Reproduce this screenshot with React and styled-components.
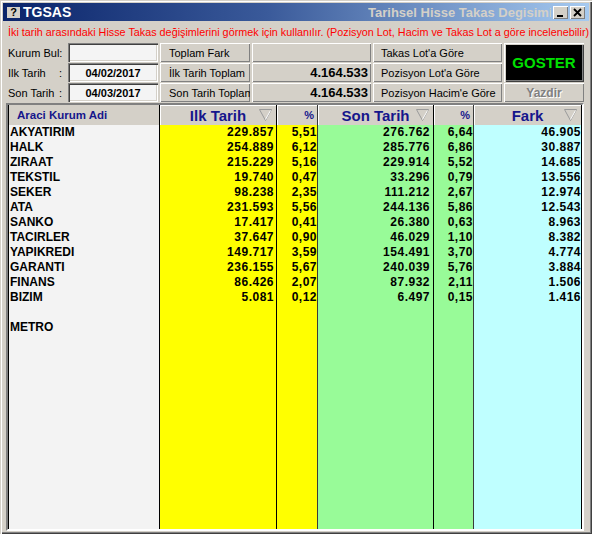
import React from "react";
import styled, { createGlobalStyle } from "styled-components";

const GlobalStyle = createGlobalStyle`
  html, body { margin: 0; padding: 0; background: #d4d0c8; }
  body { font-family: "Liberation Sans", Arial, sans-serif; }
`;

const raised = `box-shadow: inset 1px 1px #fff, inset -1px -1px #808080;`;

const Window = styled.div`
  width: 592px;
  height: 534px;
  box-sizing: border-box;
  padding: 3px;
  background: #d4d0c8;
  box-shadow: inset 1px 1px #d4d0c8, inset 2px 2px #fff, inset -1px -1px #404040, inset -2px -2px #808080;
  display: flex;
  flex-direction: column;
  font-family: "Liberation Sans", Arial, sans-serif;
  color: #000;
`;

const TitleBar = styled.div`
  height: 18px;
  flex-shrink: 0;
  display: flex;
  align-items: center;
  padding: 0 4px 0 4px;
  background: linear-gradient(90deg, #0a246a 0%, #3a5a9a 45%, #a6caf0 100%);
`;

const AppIcon = styled.div`
  width: 13px;
  height: 11px;
  background: #d4d0c8;
  color: #000;
  font-size: 11px;
  font-weight: bold;
  line-height: 11px;
  text-align: center;
  margin-right: 3px;
`;

const AppName = styled.span`
  color: #fff;
  font-size: 14px;
  font-weight: bold;
`;

const Caption = styled.div`
  margin-left: auto;
  width: 183px;
  overflow: hidden;
  white-space: nowrap;
  color: #d4d0c8;
  font-size: 13px;
  font-weight: bold;
`;

const CaptionButton = styled.div`
  width: 15px;
  height: 13px;
  margin-left: 2px;
  background: #d4d0c8;
  ${raised}
  display: flex;
  align-items: center;
  justify-content: center;
`;

const Info = styled.div`
  height: 22px;
  line-height: 22px;
  padding-left: 5px;
  color: #f00;
  font-size: 10.8px;
  white-space: nowrap;
  overflow: hidden;
  flex-shrink: 0;
`;

const Controls = styled.div`
  display: grid;
  grid-template-columns: 58px 90px 90px 119px 129px 80px;
  grid-template-rows: repeat(3, 19px);
  column-gap: 2px;
  row-gap: 1px;
  padding-left: 5px;
  flex-shrink: 0;
`;

const Label = styled.div`
  display: flex;
  align-items: center;
  justify-content: space-between;
  padding-right: 4px;
  font-size: 11px;
  white-space: pre;
`;

const DateBox = styled.div`
  background: #f4f4f4;
  box-shadow: inset 1px 1px #808080, inset 2px 2px #404040, inset -1px -1px #fff, inset -2px -2px #d4d0c8;
  display: flex;
  align-items: center;
  justify-content: center;
  font-size: 11px;
  font-weight: bold;
`;

const Button = styled.div`
  background: #d4d0c8;
  ${raised}
  display: flex;
  align-items: center;
  padding-left: ${(p) => p.$pad || 9}px;
  font-size: 11px;
  white-space: nowrap;
  overflow: hidden;
`;

const Value = styled.div`
  background: #d4d0c8;
  ${raised}
  display: flex;
  align-items: center;
  justify-content: flex-end;
  padding-right: 3px;
  font-size: 13px;
  font-weight: bold;
`;

const Goster = styled.div`
  grid-row: span 2;
  background: #000;
  box-shadow: inset 1px 1px #fff, inset 2px 2px #d4d0c8, inset -1px -1px #404040, inset -2px -2px #808080;
  display: flex;
  align-items: center;
  justify-content: center;
  color: #00e000;
  font-size: 15px;
  font-weight: bold;
`;

const Yazdir = styled.div`
  background: #d4d0c8;
  ${raised}
  display: flex;
  align-items: center;
  justify-content: center;
  color: #808080;
  text-shadow: 1px 1px #fff;
  font-size: 12px;
  font-weight: bold;
`;

const Grid = styled.div`
  flex: 1;
  min-height: 0;
  margin: 1px 5px 0 3px;
  border: 2px solid;
  border-color: #808080 #fff #fff #808080;
  display: flex;
  overflow: hidden;
`;

const Column = styled.div`
  width: ${(p) => p.$w}px;
  box-sizing: border-box;
  flex-shrink: 0;
  display: flex;
  flex-direction: column;
  background: ${(p) => p.$bg};
  border-right: 1px solid ${(p) => p.$line};
  border-left: ${(p) => (p.$first ? "1px solid #000" : "none")};
`;

const HeadCell = styled.div`
  position: relative;
  height: 20px;
  flex-shrink: 0;
  box-sizing: border-box;
  background: #d4d0c8;
  ${(p) => (p.$plain ? "" : "box-shadow: inset 0 1px #fff, inset 1px 0 #fff;")}
  display: flex;
  align-items: center;
  justify-content: ${(p) => p.$align};
  padding: 0 ${(p) => p.$padR}px 0 ${(p) => p.$padL}px;
  color: #16168c;
  font-size: ${(p) => p.$size}px;
  font-weight: bold;
  white-space: nowrap;
`;

const SortMark = styled.svg`
  position: absolute;
  right: 4px;
  top: 4px;
`;

const Cell = styled.div`
  height: 15px;
  line-height: 15px;
  flex-shrink: 0;
  font-size: 12px;
  font-weight: bold;
  letter-spacing: ${(p) => (p.$num ? "0.5px" : "0")};
  text-align: ${(p) => p.$align};
  padding: 0 ${(p) => p.$padR}px 0 ${(p) => p.$padL}px;
  white-space: nowrap;
`;

const columns = [
  { title: "Araci Kurum Adi", w: 152, bg: "#f3f3f3", line: "#000", align: "left", head: "flex-start", size: 11.5, plain: true, padL: 8, padR: 0, cellL: 1, cellR: 0 },
  { title: "Ilk Tarih", w: 117, bg: "#ffff00", line: "#000", align: "right", head: "center", size: 15, sort: true, padL: 0, padR: 0, cellL: 0, cellR: 2 },
  { title: "%", w: 41, bg: "#ffff00", line: "#3a3a3a", align: "right", head: "flex-end", size: 11, padL: 0, padR: 3, cellL: 0, cellR: 0 },
  { title: "Son Tarih", w: 116, bg: "#98fb98", line: "#000", align: "right", head: "center", size: 15, sort: true, padL: 0, padR: 0, cellL: 0, cellR: 3 },
  { title: "%", w: 40, bg: "#98fb98", line: "#3a3a3a", align: "right", head: "flex-end", size: 11, padL: 0, padR: 3, cellL: 0, cellR: 0 },
  { title: "Fark", w: 108, bg: "#bfffff", line: "#000", align: "right", head: "center", size: 15, sort: true, padL: 0, padR: 0, cellL: 0, cellR: 0 },
];

const rows = [
  ["AKYATIRIM", "229.857", "5,51", "276.762", "6,64", "46.905"],
  ["HALK", "254.889", "6,12", "285.776", "6,86", "30.887"],
  ["ZIRAAT", "215.229", "5,16", "229.914", "5,52", "14.685"],
  ["TEKSTIL", "19.740", "0,47", "33.296", "0,79", "13.556"],
  ["SEKER", "98.238", "2,35", "111.212", "2,67", "12.974"],
  ["ATA", "231.593", "5,56", "244.136", "5,86", "12.543"],
  ["SANKO", "17.417", "0,41", "26.380", "0,63", "8.963"],
  ["TACIRLER", "37.647", "0,90", "46.029", "1,10", "8.382"],
  ["YAPIKREDI", "149.717", "3,59", "154.491", "3,70", "4.774"],
  ["GARANTI", "236.155", "5,67", "240.039", "5,76", "3.884"],
  ["FINANS", "86.426", "2,07", "87.932", "2,11", "1.506"],
  ["BIZIM", "5.081", "0,12", "6.497", "0,15", "1.416"],
  ["", "", "", "", "", ""],
  ["METRO", "", "", "", "", ""],
];

function Triangle() {
  return (
    <SortMark width="13" height="12" viewBox="0 0 13 12">
      <polygon points="0.5,0.5 12.5,0.5 6.5,11.5" fill="none" stroke="#9a9a9a" />
      <line x1="11.5" y1="1.5" x2="6.5" y2="10.5" stroke="#fff" />
    </SortMark>
  );
}

export default function App() {
  return (
    <Window>
      <GlobalStyle />
      <TitleBar>
        <AppIcon>?</AppIcon>
        <AppName>TGSAS</AppName>
        <Caption>Tarihsel Hisse Takas Degisimi</Caption>
        <CaptionButton>
          <svg width="9" height="9" viewBox="0 0 9 9">
            <rect x="1" y="7" width="6" height="2" fill="#000" />
          </svg>
        </CaptionButton>
        <CaptionButton>
          <svg width="9" height="9" viewBox="0 0 9 9">
            <path d="M1 1 L8 8 M8 1 L1 8" stroke="#000" strokeWidth="1.8" />
          </svg>
        </CaptionButton>
      </TitleBar>

      <Info>
        İki tarih arasındaki Hisse Takas değişimlerini görmek için kullanılır. (Pozisyon Lot, Hacim ve Takas Lot a göre incelenebilir)
      </Info>

      <Controls>
        <Label><span>Kurum Bul</span><span>:</span></Label>
        <DateBox />
        <Button>Toplam Fark</Button>
        <Value />
        <Button $pad={8}>Takas Lot'a Göre</Button>
        <Goster>GOSTER</Goster>

        <Label><span>Ilk Tarih</span><span>:</span></Label>
        <DateBox>04/02/2017</DateBox>
        <Button>İlk Tarih Toplam</Button>
        <Value>4.164.533</Value>
        <Button $pad={8}>Pozisyon Lot'a Göre</Button>

        <Label><span>Son Tarih</span><span>:</span></Label>
        <DateBox>04/03/2017</DateBox>
        <Button>Son Tarih Toplam</Button>
        <Value>4.164.533</Value>
        <Button $pad={8}>Pozisyon Hacim'e Göre</Button>
        <Yazdir>Yazdir</Yazdir>
      </Controls>

      <Grid>
        {columns.map((c, i) => (
          <Column key={i} $w={c.w} $bg={c.bg} $line={c.line} $first={i === 0}>
            <HeadCell $plain={c.plain} $align={c.head} $size={c.size} $padL={c.padL} $padR={c.padR}>
              {c.title}
              {c.sort && <Triangle />}
            </HeadCell>
            {rows.map((r, j) => (
              <Cell key={j} $align={c.align} $num={i > 0} $padL={c.cellL} $padR={c.cellR}>
                {r[i]}
              </Cell>
            ))}
          </Column>
        ))}
      </Grid>
    </Window>
  );
}
